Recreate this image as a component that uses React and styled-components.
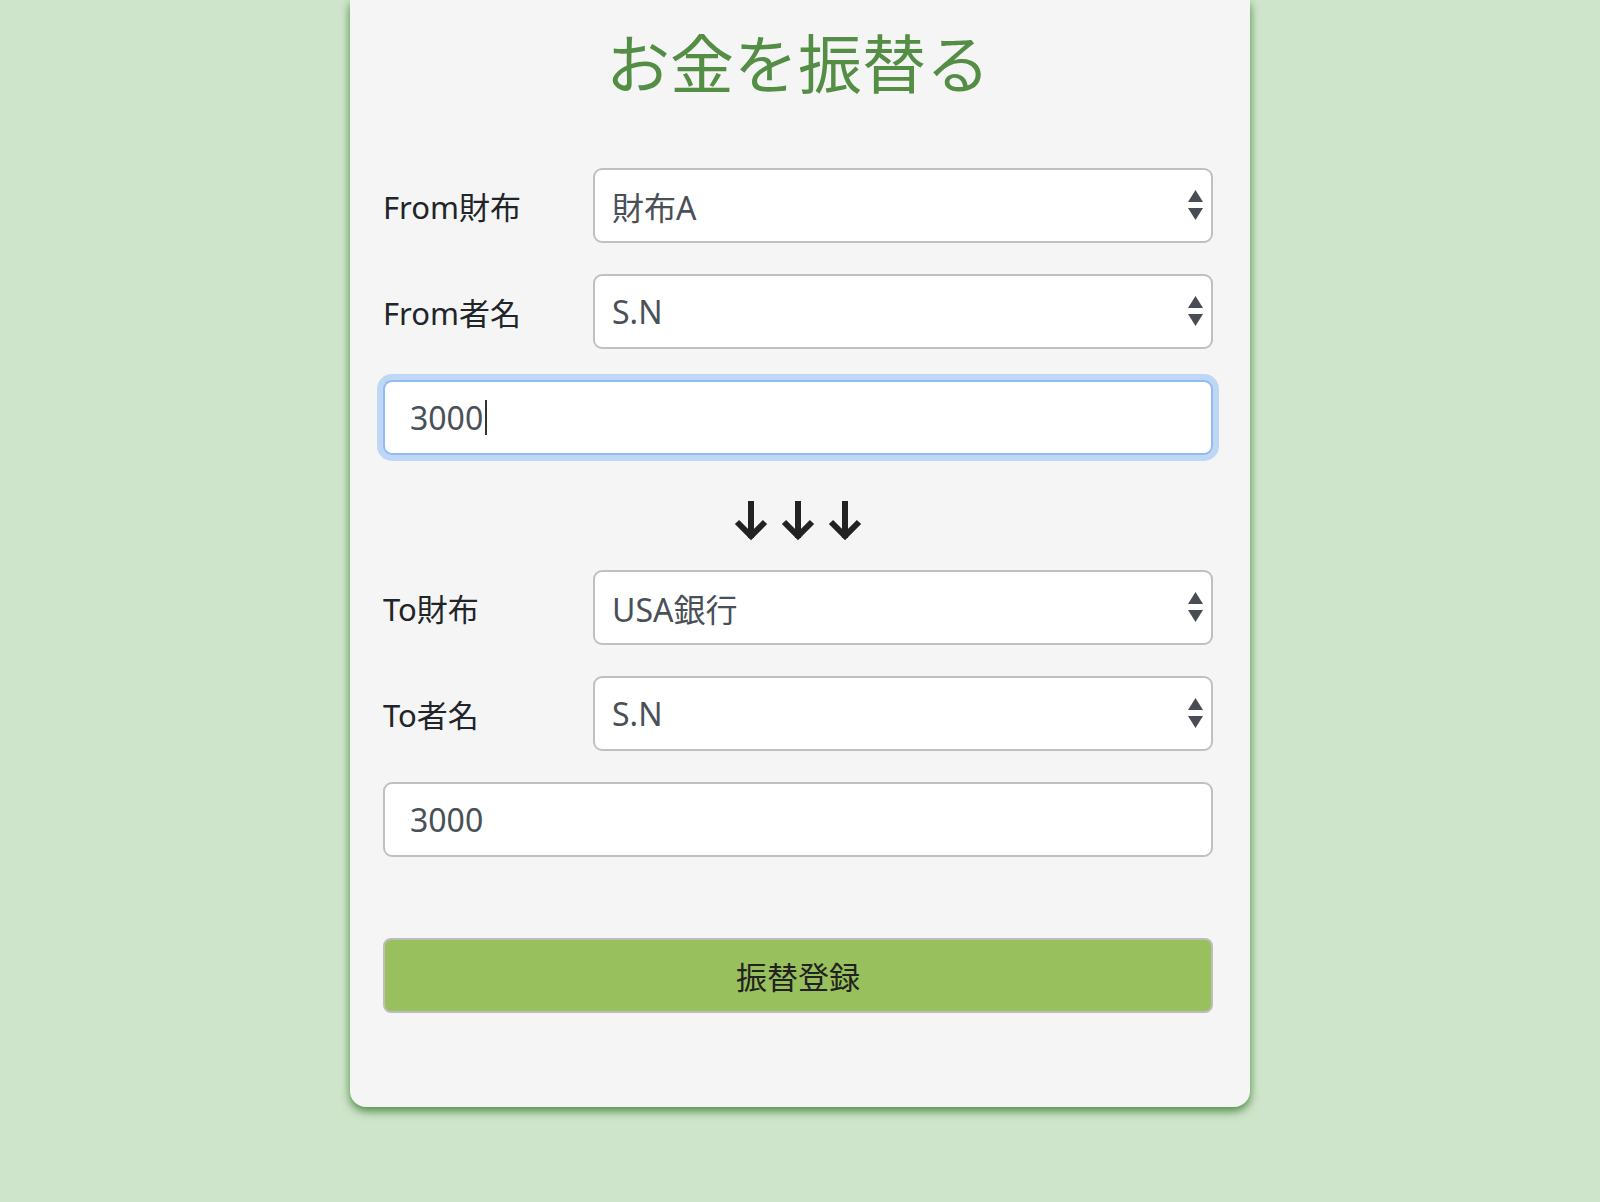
import React from 'react';
import styled, { createGlobalStyle } from 'styled-components';

const GlobalStyle = createGlobalStyle`
  html, body {
    margin: 0;
    padding: 0;
    background: #cfe5cb;
    font-family: "Noto Sans", "Noto Sans CJK JP", sans-serif;
  }
`

function Field({ value, focused }) {
    return (
        <TextBox $focused={focused}>
            {value}
            {focused && <Caret />}
        </TextBox>
    );
}

function Select({ value }) {
    return (
        <SelectBox>
            <span>{value}</span>
            <svg width="15" height="31" viewBox="0 0 15 31">
                <polygon points="0,12 7.5,0 15,12" fill="#484c53" />
                <polygon points="0,18 15,18 7.5,30" fill="#484c53" />
            </svg>
        </SelectBox>
    );
}

// 矢印アイコン
function DownArrow() {
    return (
        <svg width="34" height="40" viewBox="0 0 34 40">
            <path d="M17 0 V37" stroke="#222" strokeWidth="6" fill="none" />
            <path d="M3 21 L17 35 L31 21" stroke="#222" strokeWidth="6" fill="none" />
        </svg>
    );
}

function App() {
    return (
        <Page>
            <GlobalStyle />
            <Card>
                <Title>お金を振替る</Title>
                <Row>
                    <Label>From財布</Label>
                    <Select value="財布A" />
                </Row>
                <Row>
                    <Label>From者名</Label>
                    <Select value="S.N" />
                </Row>
                <Field value="3000" focused />
                <Arrows aria-label="↓↓↓">
                    <DownArrow />
                    <DownArrow />
                    <DownArrow />
                </Arrows>
                <Row>
                    <Label>To財布</Label>
                    <Select value="USA銀行" />
                </Row>
                <Row>
                    <Label>To者名</Label>
                    <Select value="S.N" />
                </Row>
                <Field value="3000" />
                <SubmitButton>振替登録</SubmitButton>
            </Card>
        </Page>
    );
}

export default App;

const Page = styled.div`
    min-height: 100vh;
    background: #cfe5cb;
    padding-bottom: 40px;
`

const Card = styled.div`
    width: 900px;
    margin: 0 auto;
    box-sizing: border-box;
    padding: 22px 37px 94px 33px;
    background: #f5f5f5;
    border-radius: 0 0 16px 16px;
    box-shadow: 0 4px 10px rgba(50, 120, 40, 0.85);
    display: flex;
    flex-direction: column;
`

const Title = styled.h1`
    margin: 0 0 69px;
    text-align: center;
    font-size: 64px;
    line-height: 77px;
    font-weight: 400;
    color: #548e45;
    font-family: "Noto Sans CJK JP", sans-serif;
`

const Row = styled.div`
    display: grid;
    grid-template-columns: 210px 1fr;
    align-items: center;
    height: 75px;
    margin-bottom: 31px;
`

const Label = styled.div`
    font-size: 31px;
    color: #212529;
`

const SelectBox = styled.div`
    height: 75px;
    box-sizing: border-box;
    border: 2px solid #c0c0c0;
    border-radius: 9px;
    background: white;
    display: flex;
    align-items: center;
    justify-content: space-between;
    padding: 0 8px 0 17px;
    font-size: 32px;
    color: #495057;
`

const TextBox = styled.div`
    height: 75px;
    box-sizing: border-box;
    border: 2px solid ${p => p.$focused ? '#8fbcf9' : '#c0c0c0'};
    border-radius: 9px;
    background: white;
    display: flex;
    align-items: center;
    padding: 0 25px;
    font-size: 32px;
    color: #495057;
    margin-bottom: 31px;
    box-shadow: ${p => p.$focused ? '0 0 0 6px rgba(0, 110, 240, 0.22)' : 'none'};
`

const Caret = styled.span`
    width: 2px;
    height: 35px;
    margin-left: 2px;
    background: #333;
`

const Arrows = styled.div`
    height: 84px;
    box-sizing: border-box;
    padding: 15px 0 29px;
    display: flex;
    justify-content: center;
    gap: 13px;
`

const SubmitButton = styled.button`
    margin-top: 50px;
    height: 75px;
    border: 2px solid #bdbdbd;
    border-radius: 8px;
    background: #98c05c;
    color: #222;
    font-size: 31px;
    font-family: "Noto Sans CJK JP", sans-serif;
`
